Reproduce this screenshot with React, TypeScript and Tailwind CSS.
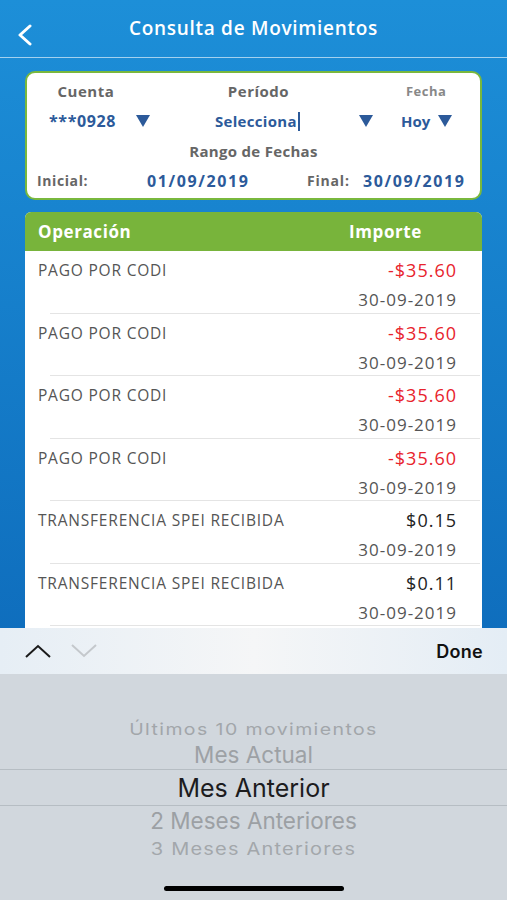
const rows = [
  { name: 'PAGO POR CODI', amount: '-$35.60', neg: true },
  { name: 'PAGO POR CODI', amount: '-$35.60', neg: true },
  { name: 'PAGO POR CODI', amount: '-$35.60', neg: true },
  { name: 'PAGO POR CODI', amount: '-$35.60', neg: true },
  { name: 'TRANSFERENCIA SPEI RECIBIDA', amount: '$0.15', neg: false },
  { name: 'TRANSFERENCIA SPEI RECIBIDA', amount: '$0.11', neg: false },
];

const Arrow = () => (
  <svg width="14" height="12" viewBox="0 0 14 12" className="shrink-0">
    <polygon points="0,0 14,0 7,12" fill="#2c5a9a" />
  </svg>
);

const App = () => {
  return (
    <div className="relative h-[900px] w-full overflow-hidden bg-gradient-to-b from-[#1d8fd8] to-[#0a60b2] font-['Open_Sans',sans-serif]">
      {/* header */}
      <div className="relative flex h-[58px] items-center justify-center border-b border-white/60">
        <svg width="18" height="22" viewBox="0 0 18 22" className="absolute left-[15px] top-[24px]">
          <polyline points="15,2 5,11 15,20" fill="none" stroke="white" strokeWidth="3" strokeLinecap="round" strokeLinejoin="round" />
        </svg>
        <span className="text-[19px] font-semibold text-white tracking-[0.7px]">Consulta de Movimientos</span>
      </div>

      {/* filters */}
      <div className="mx-[25px] mt-[13px] h-[129px] rounded-[10px] border-2 border-[#79b83d] bg-white">
        <div className="flex pt-[7px] text-[15px] font-bold text-[#666] leading-[22px]">
          <span className="w-[118px] text-center tracking-[0.5px]">Cuenta</span>
          <span className="w-[228px] text-center tracking-[0.5px]">Período</span>
          <span className="w-[108px] text-center text-[13px] text-[#888] tracking-[0.5px]">Fecha</span>
        </div>
        <div className="mt-[8px] flex h-[22px] items-center text-[15px] font-bold text-[#2c5a9a]">
          <div className="flex w-[163px] items-center pl-[22px]">
            <span className="w-[87px] text-[16px] tracking-[0.6px]">***0928</span>
            <Arrow />
          </div>
          <div className="flex w-[183px] items-center pl-[25px]">
            <span className="flex w-[145px] items-center tracking-[0.3px]">
              Selecciona
              <span className="ml-[1px] h-[19px] w-[2px] bg-[#2c5a9a]" />
            </span>
            <Arrow />
          </div>
          <div className="flex items-center pl-[28px]">
            <span className="w-[37px]">Hoy</span>
            <Arrow />
          </div>
        </div>
        <div className="mt-[8px] text-center text-[15px] font-bold leading-[22px] text-[#666] tracking-[0.3px]">
          Rango de Fechas
        </div>
        <div className="mt-[8px] flex items-center text-[14px] font-bold leading-[22px]">
          <span className="ml-[10px] w-[110px] text-[#666] tracking-[0.6px]">Inicial:</span>
          <span className="w-[160px] text-[16px] text-[#2c5a9a] tracking-[1.6px]">01/09/2019</span>
          <span className="w-[56px] text-[#666] tracking-[0.8px]">Final:</span>
          <span className="text-[16px] text-[#2c5a9a] tracking-[1.6px]">30/09/2019</span>
        </div>
      </div>

      {/* table */}
      <div className="mx-[25px] mt-[12px] overflow-hidden rounded-t-[6px] bg-white">
        <div className="flex h-[39px] items-center bg-[#78b43b] text-[17px] font-bold text-white tracking-[0.6px]">
          <span className="ml-[13px] w-[311px]">Operación</span>
          <span>Importe</span>
        </div>
        {rows.map((r, i) => (
          <div key={i} className="flex h-[62.5px] flex-col">
            <div className="flex h-[30px] items-end justify-between pl-[13px] pr-[25px]">
              <span className="text-[15.5px] leading-[22px] text-[#555] tracking-[0.8px]">{r.name}</span>
              <span className={`text-[18px] leading-[22px] tracking-[1px] ${r.neg ? 'text-[#e8232d]' : 'text-[#222]'}`}>
                {r.amount}
              </span>
            </div>
            <div className="flex h-[30px] items-end justify-end pr-[25px]">
              <span className="text-[17px] leading-[22px] text-[#555] tracking-[1px]">30-09-2019</span>
            </div>
            <div className="mt-auto ml-[25px] mr-[2px] h-px bg-[#e4e4e4]" />
          </div>
        ))}
        <div className="h-[20px]" />
      </div>

      {/* keyboard picker */}
      <div className="absolute bottom-0 left-0 right-0 h-[272px] font-['Inter',sans-serif]">
        <div className="flex h-[46px] items-center bg-gradient-to-r from-[#e6eef5] via-[#f5f6f7] to-[#e4edf5] px-[25px]">
          <svg width="26" height="14" viewBox="0 0 26 14">
            <polyline points="1,13 13,2 25,13" fill="none" stroke="#1a1a1a" strokeWidth="2" />
          </svg>
          <svg width="26" height="14" viewBox="0 0 26 14" className="ml-[20px]">
            <polyline points="1,1 13,12 25,1" fill="none" stroke="#c4c8cc" strokeWidth="2" />
          </svg>
          <span className="ml-auto mr-[-1px] text-[18px] font-semibold text-[#111] tracking-[0.3px]">Done</span>
        </div>
        <div className="relative flex h-[226px] flex-col items-center bg-[#d1d7dd] pt-[43px]">
          <span className="h-[24px] text-[19.5px] leading-[24px] text-[#a2a6aa] tracking-[1.4px] [transform:scaleY(0.85)]">
            Últimos 10 movimientos
          </span>
          <span className="mt-[1px] h-[26px] text-[22.5px] leading-[26px] text-[#9da1a5]">Mes Actual</span>
          <div className="mt-[1px] flex h-[37px] w-full items-center justify-center border-y border-[#b6bdc3] pt-[3px]">
            <span className="text-[25px] text-[#1c1c1e]">Mes Anterior</span>
          </div>
          <span className="mt-[2px] h-[26px] text-[22.5px] leading-[26px] text-[#9ca0a4]">2 Meses Anteriores</span>
          <span className="mt-[3px] h-[24px] text-[20px] leading-[24px] text-[#a3a7ab] tracking-[1.2px] [transform:scaleY(0.85)]">
            3 Meses Anteriores
          </span>
          <div className="absolute bottom-[9px] left-[164px] h-[5px] w-[180px] rounded-full bg-black" />
        </div>
      </div>
    </div>
  );
};

export default App;
